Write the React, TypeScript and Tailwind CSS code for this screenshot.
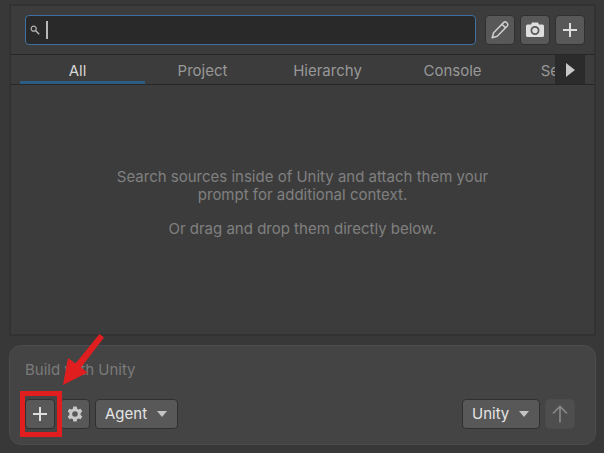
import React, { useState } from "react";
import clsx from "clsx";

const tabs = ["All", "Project", "Hierarchy", "Console", "Selections"];

const PlusIcon = () => (
  <svg className="size-4" viewBox="0 0 16 16" fill="none" stroke="#dedede" strokeWidth="2" aria-hidden="true">
    <path d="M8 1v14M1 8h14" />
  </svg>
);

const PencilIcon = () => (
  <svg className="size-5" viewBox="0 0 20 20" fill="none" stroke="#d0d0d0" strokeWidth="1.500" strokeLinejoin="round" aria-hidden="true">
    <path d="M2.200 17.800l1.400-5L13.800 2.400q1.300-1.200 2.700.1l.8.800q1.200 1.300 0 2.600L7.200 16.300zM12 4.300l3.600 3.600" />
  </svg>
);

const CameraIcon = () => (
  <svg className="size-5" viewBox="0 0 20 20" aria-hidden="true">
    <path
      fill="#dedede"
      fillRule="evenodd"
      d="M7 2.500h6l1 2h3.500a1.500 1.500 0 0 1 1.500 1.500v9.500a1.500 1.500 0 0 1-1.500 1.500h-15A1.500 1.500 0 0 1 1 15.500V6a1.500 1.500 0 0 1 1.500-1.500H6zM10 6a4.500 4.500 0 1 0 0 9 4.500 4.500 0 0 0 0-9z"
    />
    <circle cx="10" cy="10.500" r="2.700" fill="#dedede" />
  </svg>
);

const SearchIcon = () => (
  <svg className="size-[10px]" viewBox="0 0 10 10" fill="none" stroke="#b4b4b4" aria-hidden="true">
    <circle cx="3.700" cy="3.700" r="2.500" strokeWidth="1.200" />
    <path d="M5.500 5.500L9.200 9.200" strokeWidth="1.500" />
  </svg>
);

const GearIcon = () => (
  <svg className="size-4" viewBox="0 0 16 16" aria-hidden="true">
    <path
      fill="#c8c8c8"
      fillRule="evenodd"
      d="M6.300.5h3.400l.4 2.200 1.400.8 2.100-.8 1.700 2.900-1.700 1.500v1.800l1.700 1.500-1.700 2.900-2.100-.8-1.400.8-.4 2.200H6.300l-.4-2.200-1.400-.8-2.100.8L.7 10.400l1.700-1.500V7.100L.7 5.600l1.700-2.900 2.100.8 1.400-.8zM8 5.200a2.800 2.800 0 1 0 0 5.600 2.800 2.800 0 0 0 0-5.600z"
    />
  </svg>
);

const SendIcon = () => (
  <svg className="h-[18px] w-4" viewBox="0 0 16 18" fill="none" stroke="#8a8a8a" strokeWidth="1.600" aria-hidden="true">
    <path d="M8 17.500V1.500M1 8.500l7-7 7 7" />
  </svg>
);

interface IconButtonProps {
  label: string;
  disabled?: boolean;
  children: React.ReactNode;
}

const IconButton: React.FC<IconButtonProps> = ({ label, disabled, children }) => (
  <button
    type="button"
    aria-label={label}
    disabled={disabled}
    className={clsx(
      "flex h-[30px] w-[30px] shrink-0 items-center justify-center rounded-sm border",
      disabled ? "border-[#4b4b4b] bg-[#4e4e4e]" : "border-[#303030] bg-[#585858]"
    )}
  >
    {children}
  </button>
);

interface DropdownProps {
  label: string;
  options: string[];
}

const Dropdown: React.FC<DropdownProps> = ({ label, options }) => (
  <div className="relative">
    <select
      aria-label={label}
      className="block h-[30px] appearance-none rounded-sm border border-[#303030] bg-[#585858] pr-[29px] pl-[9px] text-[#e4e4e4]"
    >
      {options.map((option) => (
        <option key={option}>{option}</option>
      ))}
    </select>
    <svg className="pointer-events-none absolute top-3 right-[11px] h-[6px] w-[10px]" viewBox="0 0 10 6" aria-hidden="true">
      <path d="M0 0h10L5 6z" fill="#c4c4c4" />
    </svg>
  </div>
);

export default function App() {
  const [activeTab, setActiveTab] = useState("All");
  const [query, setQuery] = useState("");
  const [prompt, setPrompt] = useState("");

  return (
    <div className="flex min-h-screen flex-col gap-[9px] bg-[#383838] pt-1 pr-2 pb-2 pl-[9px] font-['Inter',sans-serif] text-[15px]">
      <section className="flex flex-1 flex-col border-2 border-[#323232] bg-[#3c3c3c]">
        <div className="flex items-center gap-[5px] py-[9px] pr-[9px] pl-[14px]">
          <label className="mr-1 flex h-[30px] min-w-0 flex-1 items-center gap-[6px] rounded-sm border border-[#40709f] bg-[#292929] px-1">
            <SearchIcon />
            <span className="h-[18px] w-[2px] bg-[#b8b8b8]" />
            <input
              aria-label="Search sources"
              value={query}
              onChange={(e) => setQuery(e.target.value)}
              className="min-w-0 flex-1 bg-transparent text-[#d2d2d2] outline-none"
            />
          </label>
          <IconButton label="Annotate">
            <PencilIcon />
          </IconButton>
          <IconButton label="Screenshot">
            <CameraIcon />
          </IconButton>
          <IconButton label="Add source">
            <PlusIcon />
          </IconButton>
        </div>

        <div className="flex h-[31px] border-y border-[#272727] pr-[9px] pl-[9px]">
          <div className="flex min-w-0 flex-1 overflow-hidden">
            {tabs.map((tab) => (
              <button
                key={tab}
                type="button"
                onClick={() => setActiveTab(tab)}
                className={clsx(
                  "w-[125px] shrink-0 border-b-3 pt-[5px] pr-[10px]",
                  activeTab === tab ? "border-[#2c5d87] text-[#d6d6d6]" : "border-transparent text-[#989898]"
                )}
              >
                {tab}
              </button>
            ))}
          </div>
          <button type="button" aria-label="More tabs" className="flex w-[30px] items-center justify-center bg-[#2b2b2b]">
            <svg className="h-[14px] w-[9px]" viewBox="0 0 9 14" aria-hidden="true">
              <path d="M0 0l9 7-9 7z" fill="#c8c8c8" />
            </svg>
          </button>
        </div>

        <div className="flex flex-1 flex-col items-center gap-4 px-24 pt-[83px] text-center leading-[18px] text-[#808080]">
          <p>Search sources inside of Unity and attach them your prompt for additional context.</p>
          <p>Or drag and drop them directly below.</p>
        </div>
      </section>

      <section className="rounded-xl border border-[#4c4c4c] bg-[#444444] pt-[11px] pr-5 pb-[15px] pl-[15px]">
        <input
          aria-label="Prompt"
          placeholder="Build with Unity"
          value={prompt}
          onChange={(e) => setPrompt(e.target.value)}
          className="block h-6 w-full bg-transparent text-[#d2d2d2] outline-none placeholder:text-[#7a7a7a]"
        />
        <div className="mt-[18px] flex items-center gap-[5px]">
          <div className="relative">
            <IconButton label="Add context">
              <PlusIcon />
            </IconButton>
            <span className="pointer-events-none absolute -top-2 -right-[7px] -bottom-2 -left-[5px] z-10 border-5 border-[#e01e20]" />
            <svg
              className="pointer-events-none absolute bottom-[43px] left-[36px] z-10 h-[52px] w-[44px]"
              viewBox="0 0 44 52"
              fill="#e01e20"
              aria-hidden="true"
            >
              <path d="M38.500 0L43 3.500L20 33.500L26.500 38.500L2 51L7 24L14.500 29.500Z" />
            </svg>
          </div>
          <IconButton label="Settings">
            <GearIcon />
          </IconButton>
          <Dropdown label="Mode" options={["Agent", "Ask"]} />
          <div className="ml-auto">
            <Dropdown label="Model" options={["Unity"]} />
          </div>
          <IconButton label="Send" disabled>
            <SendIcon />
          </IconButton>
        </div>
      </section>
    </div>
  );
}
